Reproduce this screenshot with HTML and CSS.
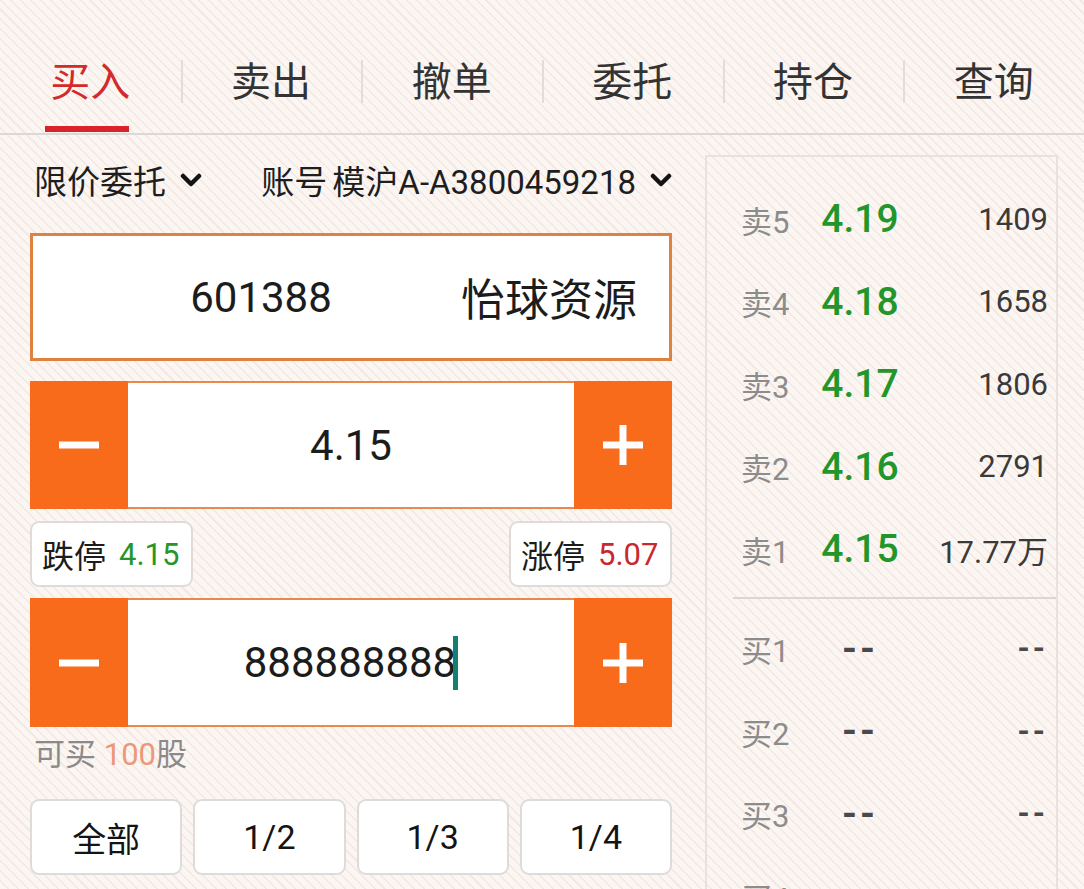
FILE: index.html
```html
<!DOCTYPE html>
<html lang="zh-CN">
<head>
<meta charset="utf-8">
<title>买入</title>
<link rel="stylesheet" href="styles.css">
</head>
<body>
<div class="screen">
  <nav class="tabs">
    <div class="tab active">买入</div>
    <div class="tab">卖出</div>
    <div class="tab">撤单</div>
    <div class="tab">委托</div>
    <div class="tab">持仓</div>
    <div class="tab">查询</div>
  </nav>
  <main class="main">
    <section class="form">
      <div class="selects">
        <div class="select first">限价委托<svg class="chev" viewBox="0 0 22 16" width="22" height="16"><path d="M3 4 L11 12 L19 4" fill="none" stroke="#141414" stroke-width="4.5" stroke-linecap="round" stroke-linejoin="round"/></svg></div>
        <div class="select"><span class="acct">账号 模沪A-A3800459218</span><svg class="chev" viewBox="0 0 22 16" width="22" height="16"><path d="M3 4 L11 12 L19 4" fill="none" stroke="#141414" stroke-width="4.5" stroke-linecap="round" stroke-linejoin="round"/></svg></div>
      </div>
      <div class="stock">
        <span class="code">601388</span>
        <span class="name">怡球资源</span>
      </div>
      <div class="stepper">
        <div class="step"><svg viewBox="0 0 40 40" width="40" height="40"><rect x="0" y="16.5" width="40" height="7" fill="#fff"/></svg></div>
        <div class="field">4.15</div>
        <div class="step"><svg viewBox="0 0 40 40" width="40" height="40"><rect x="0" y="16.5" width="40" height="7" fill="#fff"/><rect x="16.5" y="0" width="7" height="40" fill="#fff"/></svg></div>
      </div>
      <div class="limits">
        <div class="limit">跌停<span class="green">4.15</span></div>
        <div class="limit">涨停<span class="red">5.07</span></div>
      </div>
      <div class="stepper qty">
        <div class="step"><svg viewBox="0 0 40 40" width="40" height="40"><rect x="0" y="16.5" width="40" height="7" fill="#fff"/></svg></div>
        <div class="field">888888888<span class="caret"></span></div>
        <div class="step"><svg viewBox="0 0 40 40" width="40" height="40"><rect x="0" y="16.5" width="40" height="7" fill="#fff"/><rect x="16.5" y="0" width="7" height="40" fill="#fff"/></svg></div>
      </div>
      <div class="avail">可买 <span>100</span>股</div>
      <div class="portions">
        <div class="portion">全部</div>
        <div class="portion">1/2</div>
        <div class="portion">1/3</div>
        <div class="portion">1/4</div>
      </div>
    </section>
    <aside class="book">
      <div class="row"><span class="lbl">卖5</span><span class="px">4.19</span><span class="vol">1409</span></div>
      <div class="row"><span class="lbl">卖4</span><span class="px">4.18</span><span class="vol">1658</span></div>
      <div class="row"><span class="lbl">卖3</span><span class="px">4.17</span><span class="vol">1806</span></div>
      <div class="row"><span class="lbl">卖2</span><span class="px">4.16</span><span class="vol">2791</span></div>
      <div class="row"><span class="lbl">卖1</span><span class="px">4.15</span><span class="vol">17.77万</span></div>
      <div class="sep"></div>
      <div class="row"><span class="lbl">买1</span><span class="px dash">--</span><span class="vol dash">--</span></div>
      <div class="row"><span class="lbl">买2</span><span class="px dash">--</span><span class="vol dash">--</span></div>
      <div class="row"><span class="lbl">买3</span><span class="px dash">--</span><span class="vol dash">--</span></div>
      <div class="row"><span class="lbl">买4</span><span class="px dash">--</span><span class="vol dash">--</span></div>
    </aside>
  </main>
</div>
</body>
</html>
```
FILE: styles.css
```css
html, body {
  margin: 0;
  padding: 0;
}
body {
  background-color: #fcf6f3;
  background-image: repeating-linear-gradient(45deg, #fcf6f3 0px, #fcf6f3 5.5px, #f3e8e4 5.5px, #f3e8e4 7px);
  font-family: Roboto, "Noto Sans CJK SC", sans-serif;
  color: #1c1c1c;
}
.screen {
  width: 1084px;
  height: 889px;
  overflow: hidden;
}

/* tabs */
.tabs {
  display: flex;
  height: 133px;
  border-bottom: 2px solid #dcd8d6;
}
.tab {
  flex: 1;
  position: relative;
  box-sizing: border-box;
  padding-top: 33px;
  display: flex;
  align-items: center;
  justify-content: center;
  font-size: 40px;
  line-height: 1;
  color: #333;
}
.tab + .tab::before {
  content: "";
  position: absolute;
  left: 0;
  top: 60px;
  width: 2px;
  height: 43px;
  background: #e3dcd9;
}
.tab.active {
  color: #d32a2b;
}
.tab.active::after {
  content: "";
  position: absolute;
  bottom: 1px;
  left: 50%;
  margin-left: -45px;
  width: 84px;
  height: 6px;
  background: #d9232a;
}

/* main layout */
.main {
  display: flex;
  gap: 33px;
  padding-left: 30px;
}
.form {
  width: 642px;
  flex: none;
}

.selects {
  display: flex;
  justify-content: space-between;
  align-items: center;
  height: 40px;
  margin-top: 25px;
  font-size: 33px;
  color: #1e1e1e;
}
.select {
  display: flex;
  align-items: center;
  gap: 14px;
  white-space: nowrap;
}
.select.first {
  padding-left: 4px;
}
.acct {
  word-spacing: -3px;
}
.chev {
  display: block;
  flex: none;
}

.stock {
  margin-top: 33px;
  height: 128px;
  box-sizing: border-box;
  border: 3px solid #e0823f;
  background: #fff;
  display: flex;
  align-items: center;
}
.code {
  flex: 1;
  text-align: center;
  font-size: 42px;
  padding-left: 28px;
  color: #1c1c1c;
}
.name {
  font-size: 44px;
  padding-right: 32px;
  color: #1c1c1c;
}

.stepper {
  margin-top: 20px;
  height: 128px;
  display: flex;
}
.stepper.qty {
  margin-top: 11px;
  height: 129px;
}
.step {
  width: 98px;
  flex: none;
  background: #f76b1a;
  display: flex;
  align-items: center;
  justify-content: center;
}
.step svg {
  display: block;
}
.field {
  flex: 1;
  background: #fff;
  border-top: 2px solid #e98a4b;
  border-bottom: 2px solid #e98a4b;
  display: flex;
  align-items: center;
  justify-content: center;
  font-size: 42px;
  color: #1c1c1c;
}
.caret {
  display: inline-block;
  width: 5px;
  height: 54px;
  margin-left: -3px;
  background: #14806f;
}

.limits {
  display: flex;
  justify-content: space-between;
  margin-top: 12px;
}
.limit {
  width: 163px;
  height: 66px;
  box-sizing: border-box;
  border: 2px solid #dedcdb;
  border-radius: 9px;
  background: #fff;
  display: flex;
  align-items: center;
  gap: 13px;
  padding-left: 10px;
  font-size: 32px;
  color: #1c1c1c;
}
.limit span {
  font-size: 31px;
}
.green {
  color: #26962b;
}
.red {
  color: #c8282d;
}

.avail {
  margin-top: 8px;
  height: 40px;
  line-height: 40px;
  padding-left: 4px;
  font-size: 31px;
  color: #8a8a8a;
}
.avail span {
  color: #ec9878;
}

.portions {
  margin-top: 24px;
  display: grid;
  grid-template-columns: repeat(4, 1fr);
  gap: 11px;
}
.portion {
  height: 76px;
  box-sizing: border-box;
  border: 2px solid #dedcdb;
  border-radius: 9px;
  background: #fff;
  display: flex;
  align-items: center;
  justify-content: center;
  font-size: 34px;
  color: #141414;
}

/* order book */
.book {
  width: 353px;
  flex: none;
  margin-top: 20px;
  height: 800px;
  box-sizing: border-box;
  border: 2px solid #e5e2e1;
  padding: 21px 8px 0 34px;
}
.row {
  display: grid;
  grid-template-columns: 69px 100px 1fr;
  align-items: center;
  height: 82.5px;
}
.lbl {
  font-size: 31px;
  color: #8c8c8c;
  white-space: nowrap;
}
.px {
  font-size: 39px;
  font-weight: 500;
  color: #22962b;
  text-align: center;
}
.vol {
  font-size: 31px;
  color: #3a3a3a;
  text-align: right;
  white-space: nowrap;
}
.dash {
  color: #4a4a4a;
  font-weight: 700;
  letter-spacing: 3px;
}
.px.dash {
  font-size: 38px;
}
.sep {
  height: 2px;
  background: #d9d6d5;
  margin: 6px -8px 9px -8px;
}
```
